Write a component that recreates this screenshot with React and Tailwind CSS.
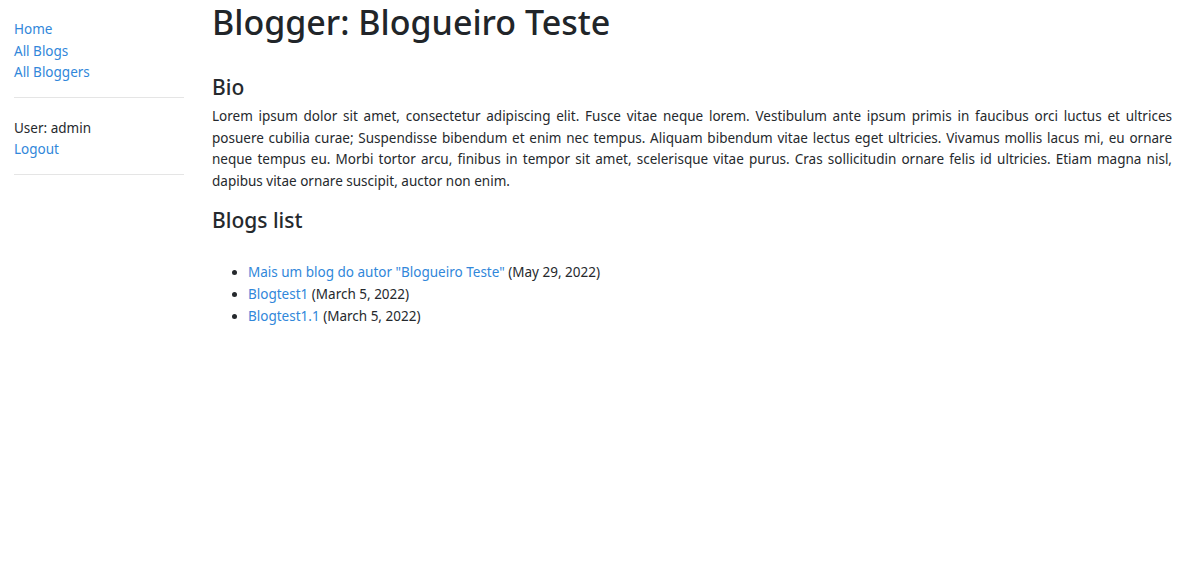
import React from 'react';

const lines = [
  'Lorem ipsum dolor sit amet, consectetur adipiscing elit. Fusce vitae neque lorem. Vestibulum ante ipsum primis in faucibus orci luctus et ultrices',
  'posuere cubilia curae; Suspendisse bibendum et enim nec tempus. Aliquam bibendum vitae lectus eget ultricies. Vivamus mollis lacus mi, eu ornare',
  'neque tempus eu. Morbi tortor arcu, finibus in tempor sit amet, scelerisque vitae purus. Cras sollicitudin ornare felis id ultricies. Etiam magna nisl,',
];

const blogs = [
  { title: 'Mais um blog do autor "Blogueiro Teste"', date: 'May 29, 2022' },
  { title: 'Blogtest1', date: 'March 5, 2022' },
  { title: 'Blogtest1.1', date: 'March 5, 2022' },
];

const App = () => {
  return (
    <div className="min-h-screen bg-white text-[#25292d] text-[13.5px] leading-[21.6px] font-['Noto_Sans',sans-serif] px-[14px]">
      <div className="flex">
        {/* Sidebar */}
        <div className="w-[170px] shrink-0 mr-[28px]">
          <ul className="mt-[19px]">
            <li><a href="#" className="text-[#3187da]">Home</a></li>
            <li><a href="#" className="text-[#3187da]">All Blogs</a></li>
            <li><a href="#" className="text-[#3187da]">All Bloggers</a></li>
          </ul>
          <hr className="mt-[13px] mb-[15px] border-t border-[#e5e5e5]" />
          <ul className="mt-[20px]">
            <li>User: admin</li>
            <li><a href="#" className="text-[#3187da]">Logout</a></li>
          </ul>
          <hr className="mt-[13px] border-t border-[#e5e5e5]" />
        </div>

        {/* Content */}
        <div className="flex-1 min-w-0 pt-[1px]">
          <h1 className="text-[34px] leading-[43px] font-medium text-[#212529]">Blogger: Blogueiro Teste</h1>

          <h4 className="mt-[29px] text-[21px] leading-[28px] font-medium">Bio</h4>
          <div className="mt-[5px]">
            {lines.map((l, i) => (
              <p key={i} className="text-justify [text-align-last:justify]">{l}</p>
            ))}
            <p>dapibus vitae ornare suscipit, auctor non enim.</p>
          </div>

          <h4 className="mt-[14px] text-[21px] leading-[28px] font-medium">Blogs list</h4>
          <ul className="mt-[28px] list-disc pl-[36px]">
            {blogs.map((b, i) => (
              <li key={i}>
                <a href="#" className="text-[#3187da]">{b.title}</a> ({b.date})
              </li>
            ))}
          </ul>
        </div>
      </div>
    </div>
  );
};

export default App;
